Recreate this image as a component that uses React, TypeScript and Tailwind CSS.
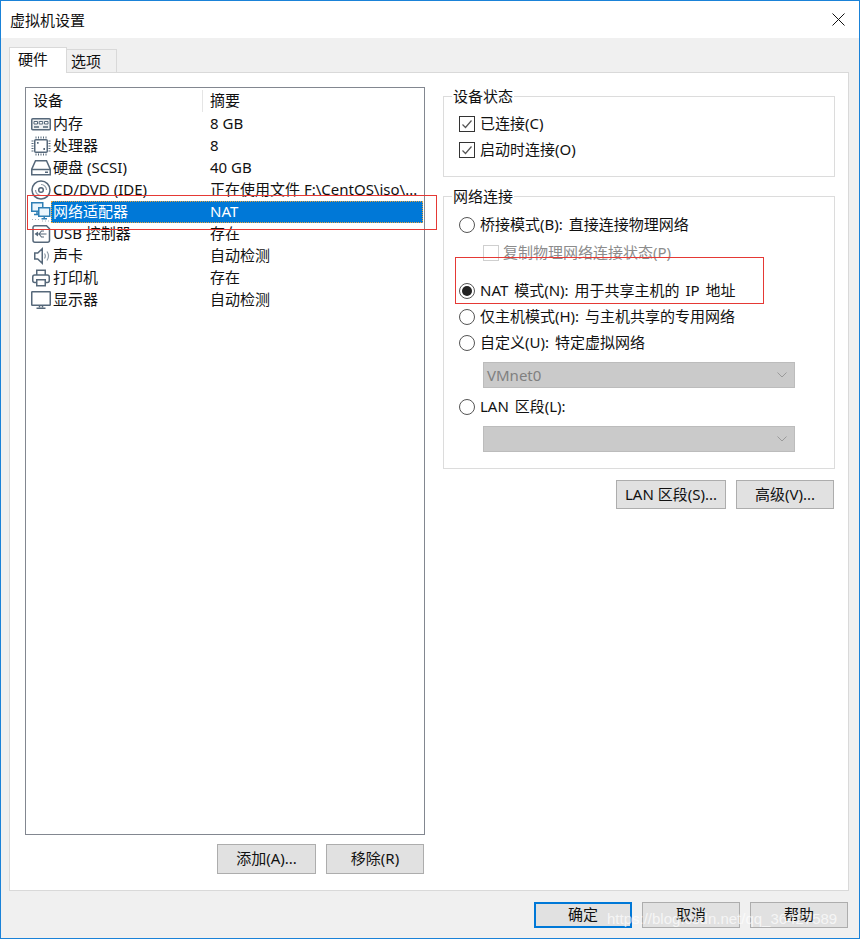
const font = "font-['Noto_Sans','Noto_Sans_CJK_SC',sans-serif]";

function DeviceIcon({ name }: { name: string }) {
  const s = '#56687a';
  return (
    <svg width="20" height="20" viewBox="0 0 20 20" fill="none" stroke={s} strokeWidth="1.5" className="shrink-0">
      {name === 'mem' && (
        <>
          <rect x="0.750" y="4.750" width="18.500" height="11" rx="1" fill="#eef0f2" />
          <path d="M3 7.500h3.500v2.500h-3.500zM8.200 7.500h3.500v2.500h-3.500zM13.500 7.500h3.500v2.500h-3.500z" strokeWidth="1" fill="#fff" />
          <path d="M3 13h5M12 13h5" strokeWidth="1.500" />
        </>
      )}
      {name === 'cpu' && (
        <>
          <rect x="3.750" y="3.750" width="12.500" height="12.500" rx="1" fill="#fff" />
          <path d="M5 0.500v2M7.500 0.500v2M10 0.500v2M12.500 0.500v2M15 0.500v2M5 17.500v2M7.500 17.500v2M10 17.500v2M12.500 17.500v2M15 17.500v2M0.500 5h2M0.500 7.500h2M0.500 10h2M0.500 12.500h2M0.500 15h2M17.500 5h2M17.500 7.500h2M17.500 10h2M17.500 12.500h2M17.500 15h2" strokeWidth="1" />
          <path d="M6 6.800h1.600M12.400 13h1.600" strokeWidth="1.800" />
        </>
      )}
      {name === 'disk' && (
        <>
          <path d="M4.500 2.750h11l3.750 8.500v5.500h-18.500v-5.500z" fill="#fff" />
          <path d="M0.750 11.500h18.500" />
          <path d="M14 14.250h3" />
        </>
      )}
      {name === 'cd' && (
        <>
          <circle cx="10" cy="10" r="9" fill="#fff" />
          <circle cx="10" cy="10" r="2.300" />
          <path d="M10 4.500a5.500 5.500 0 0 1 5.500 5.500M10 15.500a5.500 5.500 0 0 1-5.500-5.500" stroke="#8d9aa6" strokeWidth="1.200" />
        </>
      )}
      {name === 'net' && (
        <>
          <rect x="0.750" y="0.750" width="11" height="8.500" fill="#eaf5fc" stroke="#2f7fb5" />
          <path d="M6 9.500v2.500M3 12.500h6" stroke="#2f7fb5" />
          <rect x="7.750" y="5.750" width="11" height="8.500" fill="#eaf5fc" stroke="#2f7fb5" />
          <path d="M13.250 14.500v2M10.500 16.750h5.500" stroke="#2f7fb5" />
          <path d="M1 17.500h1M4 17.500h1M7 17.500h1M11 19h1M14 19h1M17 19h1" stroke="#a9b2ba" strokeWidth="1" />
        </>
      )}
      {name === 'usb' && (
        <>
          <path d="M4.500 1.750h11l3 3v11.500a2 2 0 0 1-2 2h-12.500a2 2 0 0 1-2-2v-12.500a2 2 0 0 1 2-2z" fill="#fff" />
          <path d="M4.500 10h11M4.500 10l2-1.500v3zM8 10l2.500-3h2.500M8 10l2.500 3h2.500" strokeWidth="1.100" />
        </>
      )}
      {name === 'sound' && (
        <>
          <path d="M3.750 7h3l4.500-4.250v14.500l-4.500-4.250h-3z" fill="#fff" />
          <path d="M13.500 7.500c1 1.500 1 3.500 0 5M16 5.500c2 3 2 6 0 9" stroke="#8d9aa6" strokeWidth="1.200" />
        </>
      )}
      {name === 'print' && (
        <>
          <path d="M5.750 7v-4.750h8.500v4.750" fill="#fff" />
          <rect x="1.750" y="7" width="16.500" height="7.500" rx="2" fill="#fff" />
          <rect x="5.750" y="11.750" width="8.500" height="6" fill="#fff" />
        </>
      )}
      {name === 'display' && (
        <>
          <rect x="0.750" y="1.750" width="18.500" height="13.500" rx="0.500" fill="#fff" strokeWidth="1.500" />
          <path d="M5.500 18.250h9" strokeWidth="1.500" />
          <path d="M8.500 15.500v2M11.500 15.500v2" strokeWidth="1.500" />
        </>
      )}
    </svg>
  );
}

function Radio({ on, label }: { on?: boolean; label: string }) {
  return (
    <div className="flex items-center h-[22px] pl-[15px]">
      <span className="w-4 h-4 rounded-full border border-[#555] bg-white flex items-center justify-center shrink-0">
        {on && <span className="w-[10px] h-[10px] rounded-full bg-[#222]" />}
      </span>
      <span className="ml-[5px] pb-[2px] whitespace-nowrap [word-spacing:2px]">{label}</span>
    </div>
  );
}

function Check({ label }: { label: string }) {
  return (
    <div className="flex items-center h-[26px] pl-[15px]">
      <span className="w-[16px] h-[16px] border border-[#333] bg-white flex items-center justify-center shrink-0">
        <svg width="12" height="12" viewBox="0 0 12 12" fill="none" stroke="#555" strokeWidth="1.200">
          <path d="M1.500 6.500l3 3 6-7" />
        </svg>
      </span>
      <span className="ml-[5px] pb-[2px]">{label}</span>
    </div>
  );
}

function DropBox({ value }: { value?: string }) {
  return (
    <div className="ml-[39px] w-[312px] h-[26px] bg-[#cacaca] border border-[#bcbcbc] flex items-center justify-between pl-[3px] pr-[7px] text-[#808080]">
      <span>{value}</span>
      <svg width="10" height="6" viewBox="0 0 10 6" fill="none" stroke="#9a9a9a" strokeWidth="1">
        <path d="M0.500 0.500l4.500 4.500 4.500-4.500" />
      </svg>
    </div>
  );
}

function Btn({ w, children, active }: { w: string; children: React.ReactNode; active?: boolean }) {
  return (
    <div className={`${w} flex items-center justify-center whitespace-nowrap pb-[2px] bg-[#e1e1e1] ${active ? 'border-2 border-[#0078d7]' : 'border border-[#adadad]'}`}>
      {children}
    </div>
  );
}

const devices = [
  { id: 'mem', name: '内存', sum: '8 GB' },
  { id: 'cpu', name: '处理器', sum: '8' },
  { id: 'disk', name: '硬盘 (SCSI)', sum: '40 GB' },
  { id: 'cd', name: 'CD/DVD (IDE)', sum: '正在使用文件 F:\\CentOS\\iso\\...' },
  { id: 'net', name: '网络适配器', sum: 'NAT' },
  { id: 'usb', name: 'USB 控制器', sum: '存在' },
  { id: 'sound', name: '声卡', sum: '自动检测' },
  { id: 'print', name: '打印机', sum: '存在' },
  { id: 'display', name: '显示器', sum: '自动检测' },
];

export default function App() {
  return (
    <div className={`${font} relative w-[860px] h-[939px] bg-[#f0f0f0] border border-[#1a82d8] text-[15px] leading-[20px] text-[#111] overflow-hidden`}>
      {/* title bar */}
      <div className="h-[37px] bg-white flex items-center justify-between pl-[9px] pr-[14px]">
        <span>虚拟机设置</span>
        <svg width="13" height="13" viewBox="0 0 13 13" stroke="#111" strokeWidth="1" fill="none">
          <path d="M0.500 0.500l12 12M12.500 0.500l-12 12" />
        </svg>
      </div>

      {/* tabs */}
      <div className="flex items-end h-[34px] pl-[8px] relative z-10">
        <div className="w-[58px] h-[26px] bg-white border border-[#d9d9d9] border-b-0 flex items-start pt-[1px] pl-[8px] mb-[-1px]">硬件</div>
        <div className="w-[50px] h-[23px] bg-[#f0f0f0] border border-[#d9d9d9] border-b-0 border-l-0 flex items-center pl-[4px]">选项</div>
      </div>

      {/* panel */}
      <div className="ml-[8px] w-[840px] h-[819px] bg-white border border-[#d9d9d9] flex">
        <div className="w-[433px] pl-[15px] pt-[14px] shrink-0">
          <div className="w-[400px] h-[748px] border border-[#828790]">
            <div className="flex h-[25px] items-center">
              <span className="w-[177px] pl-[7px] border-r border-[#e5e5e5] h-[22px] leading-[20px]">设备</span>
              <span className="pl-[7px] pb-[2px]">摘要</span>
            </div>
            {devices.map((d) => (
              <div key={d.id} className="flex items-center h-[22px]">
                <div className="w-[25px] pl-[5px] flex justify-start shrink-0">
                  <DeviceIcon name={d.id} />
                </div>
                <div className={`flex flex-1 h-[22px] items-center pb-[2px] mr-px ${d.id === 'net' ? 'bg-[#0078d7] text-white border border-dotted border-[#e8a33d]' : ''}`}>
                  <span className={`${d.id === 'net' ? 'w-[158px] pl-[1px]' : 'w-[159px] pl-[2px]'} whitespace-nowrap`}>{d.name}</span>
                  <span className="whitespace-nowrap">{d.sum}</span>
                </div>
              </div>
            ))}
          </div>
          <div className="flex justify-end gap-[10px] w-[399px] mt-[9px] h-[30px]">
            <Btn w="w-[99px]">添加(A)...</Btn>
            <Btn w="w-[98px]">移除(R)</Btn>
          </div>
        </div>

        <div className="w-[392px] pt-[23px]">
          <div className="relative w-[392px] h-[81px] border border-[#dcdcdc]">
            <span className="absolute left-[8px] top-[-11px] bg-white px-px">设备状态</span>
            <div className="pt-[14px]">
              <Check label="已连接(C)" />
              <Check label="启动时连接(O)" />
            </div>
          </div>

          <div className="relative w-[392px] h-[273px] border border-[#dcdcdc] mt-[19px]">
            <span className="absolute left-[8px] top-[-11px] bg-white px-px">网络连接</span>
            <div className="pt-[17px]">
              <Radio label="桥接模式(B): 直接连接物理网络" />
              <div className="flex items-center h-[22px] mt-[6px] pl-[39px] text-[#8c8c8c]">
                <span className="w-4 h-4 border border-[#cfcfcf] bg-white shrink-0" />
                <span className="ml-[4px] pb-[2px]">复制物理网络连接状态(P)</span>
              </div>
              <div className="mt-[16px]"><Radio on label="NAT 模式(N): 用于共享主机的 IP 地址" /></div>
              <div className="mt-[4px]"><Radio label="仅主机模式(H): 与主机共享的专用网络" /></div>
              <div className="mt-[4px]"><Radio label="自定义(U): 特定虚拟网络" /></div>
              <div className="mt-[8px]"><DropBox value="VMnet0" /></div>
              <div className="mt-[8px]"><Radio label="LAN 区段(L):" /></div>
              <div className="mt-[8px]"><DropBox /></div>
            </div>
          </div>

          <div className="flex justify-end gap-[10px] mt-[11px] h-[29px] w-[391px]">
            <Btn w="w-[110px]">LAN 区段(S)...</Btn>
            <Btn w="w-[98px]">高级(V)...</Btn>
          </div>
        </div>
      </div>

      {/* footer buttons */}
      <div className="flex justify-end gap-[10px] mt-[11px] h-[26px] pr-[11px]">
        <Btn w="w-[98px]" active>确定</Btn>
        <Btn w="w-[98px]">取消</Btn>
        <Btn w="w-[98px]">帮助</Btn>
      </div>

      {/* annotations drawn over the dialog */}
      <div className="absolute left-[26px] top-[194px] w-[410px] h-[35px] border border-[#e53935]" />
      <div className="absolute left-[454px] top-[256px] w-[309px] h-[47px] border border-[#e53935]" />
      <span className="absolute left-[606px] top-[908px] text-[15px] leading-[20px] text-white/70 font-['Liberation_Sans',sans-serif] whitespace-nowrap">https://blog.csdn.net/qq_36427589</span>
    </div>
  );
}
